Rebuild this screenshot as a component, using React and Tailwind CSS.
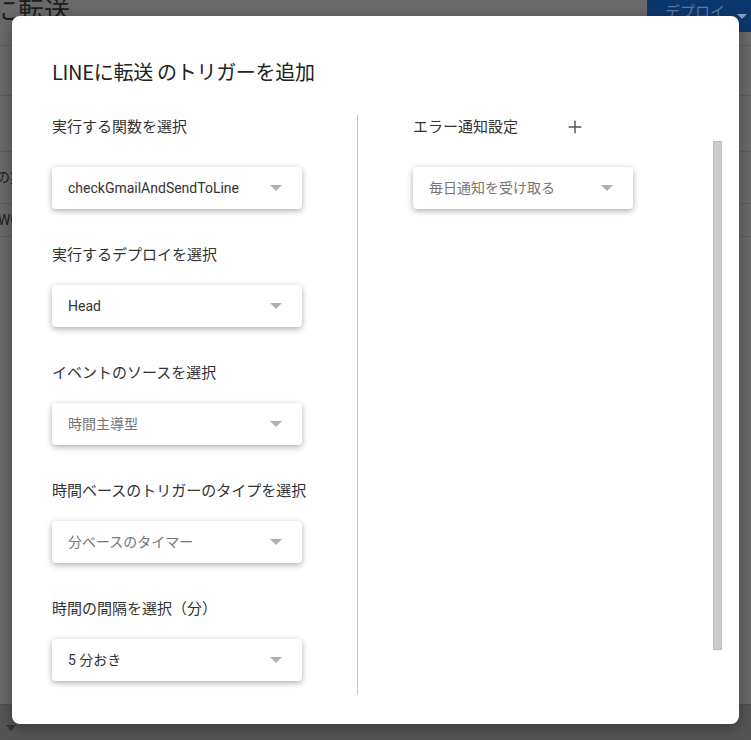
import { Plus } from 'lucide-react';

const leftFields = [
    { label: '実行する関数を選択', value: 'checkGmailAndSendToLine', dim: false },
    { label: '実行するデプロイを選択', value: 'Head', dim: false },
    { label: 'イベントのソースを選択', value: '時間主導型', dim: true },
    { label: '時間ベースのトリガーのタイプを選択', value: '分ベースのタイマー', dim: true },
    { label: '時間の間隔を選択（分）', value: '5 分おき', dim: false },
];

const Select = ({ value, dim, width }) => (
    <div className={`${width} h-[42px] bg-white rounded-[4px] shadow-[0_2px_6px_rgba(0,0,0,0.32)] flex items-center justify-between pl-4 pr-5`}>
        <span className={`text-[14px] ${dim ? 'text-[#757575]' : 'text-[#333]'}`}>{value}</span>
        <span className="w-0 h-0 border-l-[6px] border-r-[6px] border-t-[6px] border-l-transparent border-r-transparent border-t-[#b0b0b0]"></span>
    </div>
);

const App = () => {
    return (
        <div className="relative w-[751px] h-[740px] overflow-hidden bg-[#6a6a6a] text-[#333]"
            style={{ fontFamily: "Roboto, 'Noto Sans CJK JP', sans-serif" }}>
            {/* Background page under the overlay */}
            <div className="flex flex-col h-full">
                <div className="flex h-[46px] border-b border-[#5c5c5c]">
                    <div className="flex-1 -ml-[8px] -mt-[8px] text-[26px] text-[#1e1e1e]">に転送</div>
                    <div className="w-[104px] h-[32px] bg-[#0c3870] flex items-center justify-end pr-1 gap-3 text-[#5d7aa0] text-[15px]">
                        <span className="-mt-2">デプロイ</span>
                        <span className="w-0 h-0 border-l-[5px] border-r-[5px] border-t-[5px] border-l-transparent border-r-transparent border-t-[#8aa0c0]"></span>
                    </div>
                </div>
                <div className="h-[50px] border-b border-[#5c5c5c]"></div>
                <div className="h-[56px] border-b border-[#5c5c5c]"></div>
                <div className="h-[52px] border-b border-[#5c5c5c] flex items-center -ml-[4px] text-[14px] text-[#1e1e1e]">の実</div>
                <div className="h-[33px] border-b border-[#5c5c5c] flex items-center -ml-[2px] text-[14px] text-[#1e1e1e]">WO</div>
                <div className="flex-1"></div>
                <div className="h-[36px] border-t border-[#4e4e4e] bg-[#555] pl-[6px] pt-[20px]">
                    <span className="block w-0 h-0 border-l-[5px] border-r-[5px] border-t-[6px] border-l-transparent border-r-transparent border-t-[#333]"></span>
                </div>
            </div>

            {/* Dialog */}
            <div className="absolute left-[12px] top-[16px] w-[727px] h-[708px] bg-white rounded-[8px] shadow-[0_4px_16px_rgba(0,0,0,0.35)]">
                <h1 className="absolute left-[40px] top-[40px] text-[20px] leading-[32px] text-[#222] tracking-[-0.3px]"
                    style={{ fontFamily: "'Noto Sans CJK JP', sans-serif" }}>
                    LINEに転送 のトリガーを追加
                </h1>

                <div className="absolute left-[40px] top-[99px] right-[17px] flex">
                    <div className="w-[306px] border-r border-[#c8c8c8] h-[580px] flex flex-col gap-[34px]">
                        {leftFields.map((f, i) => (
                            <div key={i} className="flex flex-col">
                                <div className="h-[24px] text-[15px] leading-[24px] text-[#333]">{f.label}</div>
                                <div className={i === 0 ? 'mt-[28px]' : 'mt-[18px]'}>
                                    <Select value={f.value} dim={f.dim} width="w-[250px]" />
                                </div>
                            </div>
                        ))}
                    </div>
                    <div className="flex-1 flex">
                        <div className="flex-1 pl-[55px]">
                            <div className="flex items-center h-[24px]">
                                <span className="text-[15px] leading-[24px] text-[#333]">エラー通知設定</span>
                                <Plus className="ml-[47px] w-[20px] h-[20px] text-[#555]" strokeWidth={1.75} />
                            </div>
                            <div className="mt-[28px]">
                                <Select value="毎日通知を受け取る" dim width="w-[220px]" />
                            </div>
                        </div>
                        <div className="w-[9px] mt-[26px] h-[509px] bg-[#cdcdcd] border border-[#bdbdbd]"></div>
                    </div>
                </div>
            </div>
        </div>
    );
};

export default App;
